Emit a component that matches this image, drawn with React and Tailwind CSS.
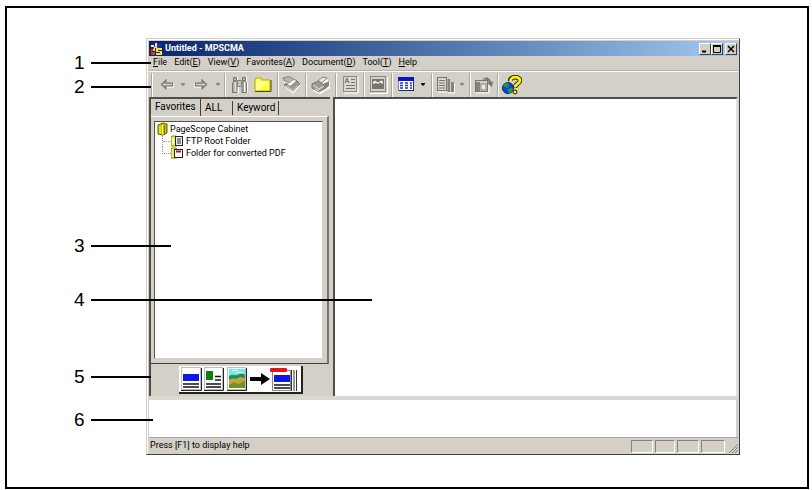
const menus = [
  { before: "", key: "F", after: "ile" },
  { before: "Edit(", key: "E", after: ")" },
  { before: "View(", key: "V", after: ")" },
  { before: "Favorites(", key: "A", after: ")" },
  { before: "Document(", key: "D", after: ")" },
  { before: "Tool(", key: "T", after: ")" },
  { before: "", key: "H", after: "elp" },
];

const callouts = [
  { n: 1, top: "top-[53px]", line: "w-[60px]" },
  { n: 2, top: "top-[77px]", line: "w-[60px]" },
  { n: 3, top: "top-[236px]", line: "w-[80px]" },
  { n: 4, top: "top-[290px]", line: "w-[281px]" },
  { n: 5, top: "top-[367px]", line: "w-[60px]" },
  { n: 6, top: "top-[410px]", line: "w-[62px]" },
];

const AppIcon = () => (
  <svg width="13" height="14" viewBox="0 0 13 14">
    <rect x="0" y="1" width="9" height="12" fill="#2a2350" />
    <path d="M1 3h3v2H1zM5 1h2v3H5z" fill="#e8e4f0" />
    <path d="M1 7h3v2H2v4H1z" fill="#d22" />
    <path d="M4 5l4-2v3H5v3H3z" fill="#f5e85a" />
    <path d="M7 1l5 1-1 3-4 1z" fill="#1d2fa8" />
    <path d="M6 6h6v2H8v1h4v4H6v-2h4v-1H6z" fill="#f0e34c" />
    <path d="M2 10h3v3H2z" fill="#8a5f28" />
  </svg>
);

const ArrowIcon = ({ flip }) => (
  <svg width="14" height="12" viewBox="0 0 14 12" className={flip ? "-scale-x-100" : ""}>
    <path d="M7 1v3.500h7v4H7V12L2 7z" fill="#fff" />
    <path d="M6 1v3h6.500v3H6v3L1.500 5.500z" fill="#aeaba5" stroke="#77756f" strokeWidth="1.200" />
    <path d="M3 5.500h9" stroke="#d8d5cf" />
  </svg>
);

const BinocularsIcon = () => (
  <svg width="18" height="18" viewBox="0 0 18 18">
    <path d="M3 1h4v4h1.500V4H11v1h1V1h4v4l1 3v9h-6v-6H8v6H2V8l1-3z" fill="#fff" />
    <path d="M2.500 1.500h3v3h-3zM11.500 1.500h3v3h-3z" fill="#b5b2ac" stroke="#77756f" />
    <path d="M2.500 5l-1 3v8.500h4.500V5zM14.500 5l1 3v8.500H11V5z" fill="#c6c3bc" stroke="#77756f" />
    <path d="M6.500 4.500h4v6h-4z" fill="#c6c3bc" stroke="#85837e" />
    <path d="M4 6v10M13.500 6v10" stroke="#fff" />
    <path d="M3 6v10M12.500 6v10" stroke="#9a9892" />
  </svg>
);

const FolderIcon = () => (
  <svg width="18" height="16" viewBox="0 0 18 16">
    <path d="M1 3l1-2h5l1 2h8v11H1z" fill="#ffff3c" stroke="#b3b000" />
    <path d="M2 13V4h13L4 13z" fill="#ffffb8" opacity="0.7" />
    <path d="M1 14.500h16V3" stroke="#4b4a10" fill="none" />
  </svg>
);

const ScannerIcon = () => (
  <svg width="20" height="18" viewBox="0 0 20 18">
    <path d="M2 2l13 2 4 5-8 9-9-8z" fill="#f4f3f0" />
    <path d="M1 2l6-1.500 9 5-4 3L2 4.500z" fill="#b9b6b0" stroke="#85837e" />
    <path d="M2 9l9 6 7-7-3-3-6 5-5-3z" fill="#9d9a94" stroke="#77756f" />
    <path d="M6 8.500l2 1.500 6-5-2-1z" fill="#fff" />
    <path d="M4 10l7 4.500 5-5" stroke="#dedbd6" fill="none" />
  </svg>
);

const PrinterIcon = () => (
  <svg width="20" height="18" viewBox="0 0 20 18">
    <path d="M2 9L15 3l4 3v6L9 18l-7-3z" fill="#fff" />
    <path d="M1 8l6-3 6 4v4l-5 3-7-4z" fill="#9d9a94" stroke="#77756f" />
    <path d="M7 5l5-4 4 1-5 5z" fill="#e5e3df" stroke="#85837e" />
    <path d="M12 8l6-3v5l-5 4z" fill="#85837e" />
    <path d="M2 9l6 4 5-3M9 4l5-1M4 13l4 2" stroke="#eceae6" fill="none" />
  </svg>
);

const TextDocIcon = () => (
  <svg width="17" height="19" viewBox="0 0 17 19">
    <path d="M2 18h14V2" stroke="#fff" fill="none" />
    <rect x="1.500" y="1.500" width="13" height="15" fill="#d9d6d0" stroke="#8b8984" />
    <path d="M3 8l2-5 2 5M4 6.500h2M9 4.500h4M9 7.500h4M4 10.500h9M4 13.500h9" stroke="#77756f" fill="none" />
  </svg>
);

const ImageDocIcon = () => (
  <svg width="19" height="18" viewBox="0 0 19 18">
    <path d="M1 17.500h17.500V1" stroke="#fff" fill="none" />
    <rect x="1.500" y=".5" width="15" height="15" fill="#d4d0c8" stroke="#8b8984" />
    <rect x="3" y="3" width="12" height="10" fill="#77756f" />
    <path d="M4 8V6l2-1.500 3 2 3-2 2 1V8l-3-1.500-2 1.500-2-1z" fill="#f0eeea" />
  </svg>
);

const TableIcon = () => (
  <svg width="17" height="15" viewBox="0 0 17 15">
    <rect x="0" y="1" width="16" height="13" fill="#fff" />
    <rect x="0" y="0" width="16" height="4" fill="#0a12c4" />
    <path d="M0 13.500h16M15.500 4v10" stroke="#222a6a" />
    <path d="M.5 4v10" stroke="#8088b8" />
    <path d="M2 6h3M7 6h3M12 6h2M2 8.500h3M7 8.500h3M12 8.500h2M2 11h3M7 11h3M12 11h2" stroke="#1c2cc8" strokeWidth="1.500" />
  </svg>
);

const ListDocsIcon = () => (
  <svg width="20" height="18" viewBox="0 0 20 18">
    <path d="M2 16h9M18.500 7v10H12" stroke="#fff" fill="none" />
    <rect x="1.500" y="1.500" width="9" height="13" fill="#d9d6d0" stroke="#77756f" />
    <path d="M3 4.500h6M3 7h6M3 9.500h6M3 12h6" stroke="#77756f" />
    <path d="M11.500 3H14v13h-2.500zM15 6h3v10h-3z" fill="#85837e" />
  </svg>
);

const ExportIcon = () => (
  <svg width="20" height="18" viewBox="0 0 20 18">
    <path d="M2 17h13V8" stroke="#fff" fill="none" />
    <rect x="1.500" y="4.500" width="12" height="11" fill="#d4d0c8" stroke="#77756f" />
    <path d="M2 6h4v9H2z" fill="#85837e" />
    <rect x="7" y="8" width="5" height="6" fill="#ebe9e5" stroke="#85837e" />
    <path d="M8 4c3-4 8-3 9 2l2-1-1 6-5-4 2-1c-1-2-3-3-7-2z" fill="#77756f" />
  </svg>
);

const HelpIcon = () => (
  <svg width="20" height="20" viewBox="0 0 20 20">
    <circle cx="6" cy="13" r="5.500" fill="#1540d8" stroke="#10206a" />
    <path d="M1 11c1-3 4-4 5-3l1 3-2 2-2-1zM6 14l4-1 1 2-3 4-2-2z" fill="#18a03c" />
    <g fill="none" strokeLinejoin="round">
      <path d="M8 6c0-5 10-5 10-.5 0 3.500-5 3-5 7.500" stroke="#1c1c00" strokeWidth="4.500" />
      <path d="M8.500 6c0-5 9.500-5 9.500-.5 0 3.500-5 3-5 7" stroke="#fff200" strokeWidth="2.800" />
    </g>
    <circle cx="13" cy="17" r="2" fill="#fff200" stroke="#1c1c00" />
  </svg>
);

const CabinetIcon = () => (
  <svg width="11" height="14" viewBox="0 0 11 14" className="shrink-0">
    <path d="M1 3l5-2 4 1v9l-4 2-5-1z" fill="#c9c600" stroke="#5d5b00" />
    <path d="M3 4v8M5.500 3v10" stroke="#fffb4a" />
    <path d="M7.500 3v9" stroke="#77750a" />
  </svg>
);

const FtpFolderIcon = () => (
  <svg width="13" height="12" viewBox="0 0 13 12">
    <path d="M0 2l1-1h4l1 1v9H0z" fill="#f2ee5c" stroke="#8a8800" />
    <rect x="4.500" y="1.500" width="7" height="9" fill="#eee" stroke="#222" />
    <path d="M6 4h4M6 6h4M6 8h4" stroke="#333" />
    <path d="M2 4v5" stroke="#fff" />
  </svg>
);

const PdfFolderIcon = () => (
  <svg width="13" height="12" viewBox="0 0 13 12">
    <path d="M0 2l1-1h4l1 1v9H0z" fill="#f2ee5c" stroke="#8a8800" />
    <rect x="3.500" y="2.500" width="8" height="8" fill="#fff" stroke="#222" />
    <path d="M5 4.500h5" stroke="#b01030" strokeWidth="2" />
  </svg>
);

const MergeDrawing = () => (
  <svg width="118" height="25" viewBox="0 0 118 25">
    <g fill="#fff" stroke="#bdbdbd">
      <rect x=".5" y=".5" width="19" height="22" />
      <rect x="23.500" y=".5" width="18" height="22" />
      <rect x="46.500" y=".5" width="18" height="22" />
    </g>
    <path d="M0 23.500h20.500V1M23 23.500h19.500V1M46 23.500h19.500V1" stroke="#222" fill="none" />
    <rect x="2" y="7" width="16" height="7" fill="#1018e8" />
    <path d="M2 17h16M2 20h16" stroke="#111" strokeWidth="1.500" />
    <rect x="25" y="4" width="7" height="9" fill="#0e7d14" />
    <path d="M34 9.500h6M34 13h6M25 17h15M25 20h15" stroke="#111" strokeWidth="1.500" />
    <rect x="48" y="2" width="16" height="19" fill="#6fe6fa" />
    <path d="M48 9c3-2 5 0 8-1s5-2 8 0v6H48z" fill="#1e8f52" />
    <path d="M48 13c4-3 6 0 9-2s5 0 7 0v10H48z" fill="#c3a637" />
    <path d="M48 18l5-3 4 2 7-3v7H48z" fill="#70902a" />
    <path d="M51 3.500h6M55 5.500h7" stroke="#f4fbd0" />
    <path d="M69 10h11V6l9 6-9 6v-4H69z" fill="#000" />
    <rect x="91.500" y="3.500" width="18" height="20" fill="#fff" stroke="#888" />
    <rect x="93" y="8" width="16" height="7" fill="#1018e8" />
    <path d="M93 18h16M93 21h16" stroke="#111" strokeWidth="1.500" />
    <path d="M110.500 3v21M113 3v21M115.500 3v21" stroke="#333" />
    <rect x="89" y="1" width="17" height="4" rx="1" fill="#e01818" />
  </svg>
);

const ToolButton = ({ label, width = "w-[22px]", children }) => (
  <button aria-label={label} className={`flex h-5 shrink-0 items-center justify-center ${width}`}>
    {children}
  </button>
);

const DropDot = ({ label, width, dark }) => (
  <button aria-label={label} className={`flex h-5 shrink-0 items-center justify-center ${width}`}>
    <svg width="4" height="3" viewBox="0 0 4 3">
      <path d="M0 0h4v1L2 3 0 1z" fill={dark ? "#000" : "#85837e"} />
    </svg>
  </button>
);

const Separator = ({ width = "w-1.5" }) => (
  <div className={`flex h-6 shrink-0 justify-center ${width}`}>
    <div className="w-0.5 border-l border-r border-l-[#aaa79f] border-r-white" />
  </div>
);

const WindowButton = ({ label, children }) => (
  <button
    aria-label={label}
    className="flex h-3 w-3 items-center justify-center border border-t-white border-l-white border-r-[#404040] border-b-[#404040] bg-[#d4d0c8]"
  >
    <svg width="8" height="8" viewBox="0 0 8 8" fill="none" stroke="#000">
      {children}
    </svg>
  </button>
);

const TitleBar = () => (
  <header className="flex h-[15px] items-center bg-linear-to-r from-[#0a246a] to-[#a6caf0] px-px">
    <AppIcon />
    <h1 className="ml-0.5 flex-1 text-[9px] font-bold text-white">Untitled - MPSCMA</h1>
    <WindowButton label="Minimize">
      <path d="M1 6.500h4" strokeWidth="2" />
    </WindowButton>
    <WindowButton label="Maximize">
      <path d="M.5 1v6.500h7V1M0 1h8" />
      <path d="M0 1h8" strokeWidth="2" />
    </WindowButton>
    <div className="w-0.5" />
    <WindowButton label="Close">
      <path d="M1 1l6 6M7 1L1 7" strokeWidth="1.500" />
    </WindowButton>
  </header>
);

const MenuBar = () => (
  <nav className="flex h-[15px] items-center gap-[7px] border-b border-[#b5b2ab] px-1 text-[9px]">
    {menus.map((m) => (
      <button key={m.key}>
        {m.before}
        <span className="underline">{m.key}</span>
        {m.after}
      </button>
    ))}
  </nav>
);

const Toolbar = () => (
  <div className="flex h-[26px] items-center border-t border-white">
    <Separator />
    <ToolButton label="Back" width="w-6"><ArrowIcon /></ToolButton>
    <DropDot label="Back history" width="w-2" />
    <ToolButton label="Forward" width="w-7"><ArrowIcon flip /></ToolButton>
    <DropDot label="Forward history" width="w-1.5" />
    <Separator width="w-2" />
    <ToolButton label="Search"><BinocularsIcon /></ToolButton>
    <ToolButton label="Folder" width="w-6"><FolderIcon /></ToolButton>
    <Separator />
    <ToolButton label="Scan"><ScannerIcon /></ToolButton>
    <Separator />
    <ToolButton label="Print" width="w-6"><PrinterIcon /></ToolButton>
    <Separator />
    <ToolButton label="Text"><TextDocIcon /></ToolButton>
    <Separator />
    <ToolButton label="Image"><ImageDocIcon /></ToolButton>
    <Separator />
    <ToolButton label="View"><TableIcon /></ToolButton>
    <DropDot label="View options" width="w-3" dark />
    <Separator />
    <ToolButton label="Pages"><ListDocsIcon /></ToolButton>
    <DropDot label="Page options" width="w-2.5" />
    <Separator />
    <ToolButton label="Export"><ExportIcon /></ToolButton>
    <Separator />
    <ToolButton label="Help"><HelpIcon /></ToolButton>
  </div>
);

const Tabs = () => (
  <div role="tablist" className="flex h-[17px] items-end pl-1 text-[10px] leading-[14px]">
    <button role="tab" aria-selected="true" className="h-[17px] w-[46px] border-r border-[#404040] pb-0.5 text-left">
      Favorites
    </button>
    <button role="tab" aria-selected="false" className="mb-px h-[14px] w-8 border-r border-[#404040] pl-1 text-left">
      ALL
    </button>
    <button role="tab" aria-selected="false" className="mb-px h-[14px] w-[46px] border-r border-[#404040] pl-1 text-left">
      Keyword
    </button>
  </div>
);

const FolderTree = () => (
  <ul className="flex-1 border border-t-[#55534f] border-l-[#55534f] border-r-[#d4d0c8] border-b-[#d4d0c8] bg-white pt-px pl-0.5 text-[9px] leading-3">
    <li>
      <div className="flex h-3 items-center gap-0.5">
        <CabinetIcon />
        PageScope Cabinet
      </div>
      <ul className="pl-[5px]">
        <li className="flex h-3 items-center border-l border-dotted border-[#999]">
          <span className="w-2 border-t border-dotted border-[#999]" />
          <FtpFolderIcon />
          <span className="ml-0.5">FTP Root Folder</span>
        </li>
        <li className="flex h-3 items-center">
          <span className="h-[7px] w-[9px] self-start border-b border-l border-dotted border-[#999]" />
          <PdfFolderIcon />
          <span className="ml-0.5">Folder for converted PDF</span>
        </li>
      </ul>
    </li>
  </ul>
);

const Sidebar = () => (
  <aside className="flex w-[181px] shrink-0 flex-col border-t-2 border-l-2 border-[#504e4b]">
    <Tabs />
    <div className="mr-px flex flex-1 flex-col border-t border-r-2 border-b border-t-white border-r-[#77756f] border-b-[#404040] pt-1 pr-1 pb-1 pl-[3px]">
      <FolderTree />
    </div>
    <div className="flex h-8 items-center justify-center">
      <button
        aria-label="Combine documents"
        className="flex h-7 w-[124px] items-center justify-center border-r-2 border-b-2 border-[#222] bg-white"
      >
        <MergeDrawing />
      </button>
    </div>
  </aside>
);

const StatusBar = () => (
  <footer className="flex h-[17px] items-center border-t border-[#aaa79f] text-[9px]">
    <span className="flex-1 pl-px">Press [F1] to display help</span>
    <div className="flex gap-0.5">
      <span className="h-[13px] w-[22px] border border-t-[#85837e] border-l-[#85837e] border-r-white border-b-white" />
      <span className="h-[13px] w-5 border border-t-[#85837e] border-l-[#85837e] border-r-white border-b-white" />
      <span className="h-[13px] w-[22px] border border-t-[#85837e] border-l-[#85837e] border-r-white border-b-white" />
      <span className="h-[13px] w-6 border border-t-[#85837e] border-l-[#85837e] border-r-white border-b-white" />
    </div>
    <svg width="9" height="9" viewBox="0 0 9 9" stroke="#85837e" className="mt-1 ml-1">
      <path d="M0 9l9-9M3 9l6-6M6 9l3-3" />
    </svg>
  </footer>
);

const Callout = ({ n, top, line }) => (
  <div className={`absolute left-[74px] flex h-5 items-center ${top}`}>
    <span className="w-[17px] font-['Liberation_Sans',sans-serif] text-[19px] leading-5">{n}</span>
    <span className={`h-0.5 bg-black ${line}`} />
  </div>
);

export default function App() {
  return (
    <div className="relative flex h-screen bg-white pt-[6px] pr-[3px] pb-px pl-[5px] font-['Roboto',sans-serif] text-black">
      <div className="flex flex-1 border-2 border-black pt-[30px] pr-[67px] pb-8 pl-[139px]">
        <div className="flex min-w-0 flex-1 flex-col border border-t-[#d4d0c8] border-l-[#d4d0c8] border-r-[#404040] border-b-[#404040] bg-[#d4d0c8]">
          <div className="flex flex-1 flex-col border-t border-l border-white pt-px pr-px pl-px">
            <TitleBar />
            <MenuBar />
            <Toolbar />
            <main className="flex flex-1 flex-col">
              <div className="flex flex-1">
                <Sidebar />
                <section
                  aria-label="Documents"
                  className="ml-[3px] flex-1 border-t-2 border-r-2 border-l-2 border-t-[#504e4b] border-r-[#e4e1db] border-l-[#504e4b] bg-white"
                />
              </div>
              <section
                aria-label="Output"
                className="h-[41px] border-t-4 border-r-2 border-t-[#dbd8d1] border-r-[#d4d0c8] bg-white"
              />
            </main>
            <StatusBar />
          </div>
        </div>
      </div>
      {callouts.map((c) => (
        <Callout key={c.n} {...c} />
      ))}
    </div>
  );
}
